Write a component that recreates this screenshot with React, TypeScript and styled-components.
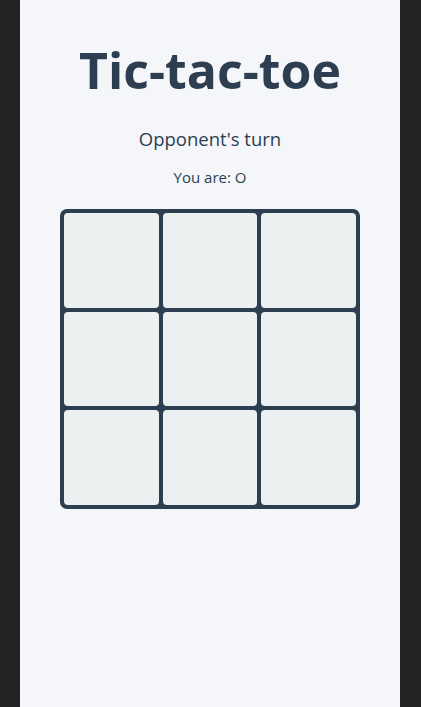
import React, { useState } from "react";
import styled, { createGlobalStyle } from "styled-components";

const GlobalStyle = createGlobalStyle`
  html, body {
    margin: 0;
    padding: 0;
    background: #222222;
    height: 100%;
  }
  #root {
    height: 100%;
  }
`;

const Page = styled.div`
  width: 380px;
  min-height: 707px;
  margin-left: 20px;
  background: #f5f6fa;
  color: #2c3e50;
  font-family: "Open Sans", "Noto Sans", sans-serif;
  display: flex;
  flex-direction: column;
  align-items: center;
`;

const Title = styled.h1`
  margin: 38px 0 0;
  font-size: 50px;
  line-height: 64px;
  font-weight: 700;
`;

const Status = styled.p`
  margin: 25px 0 0;
  font-size: 18.5px;
  line-height: 24px;
`;

const Player = styled.p`
  margin: 16px 0 0;
  font-size: 15px;
  line-height: 20px;
`;

const Board = styled.div`
  margin-top: 22px;
  width: 300px;
  height: 300px;
  box-sizing: border-box;
  padding: 4px;
  background: #2c3e50;
  border-radius: 7px;
  display: grid;
  grid-template-columns: repeat(3, 1fr);
  grid-template-rows: repeat(3, 1fr);
  gap: 4px;
`;

const Cell = styled.button`
  border: none;
  padding: 0;
  margin: 0;
  background: #ecf0f1;
  border-radius: 4px;
  font-family: inherit;
  font-size: 56px;
  font-weight: 700;
  color: #2c3e50;
  cursor: pointer;
`;

const App: React.FC = () => {
  const [cells] = useState<string[]>(Array(9).fill(""));

  return (
    <>
      <GlobalStyle />
      <Page>
        <Title>Tic-tac-toe</Title>
        <Status>Opponent's turn</Status>
        <Player>You are: O</Player>
        <Board>
          {cells.map((c, i) => (
            <Cell key={i}>{c}</Cell>
          ))}
        </Board>
      </Page>
    </>
  );
};

export default App;
